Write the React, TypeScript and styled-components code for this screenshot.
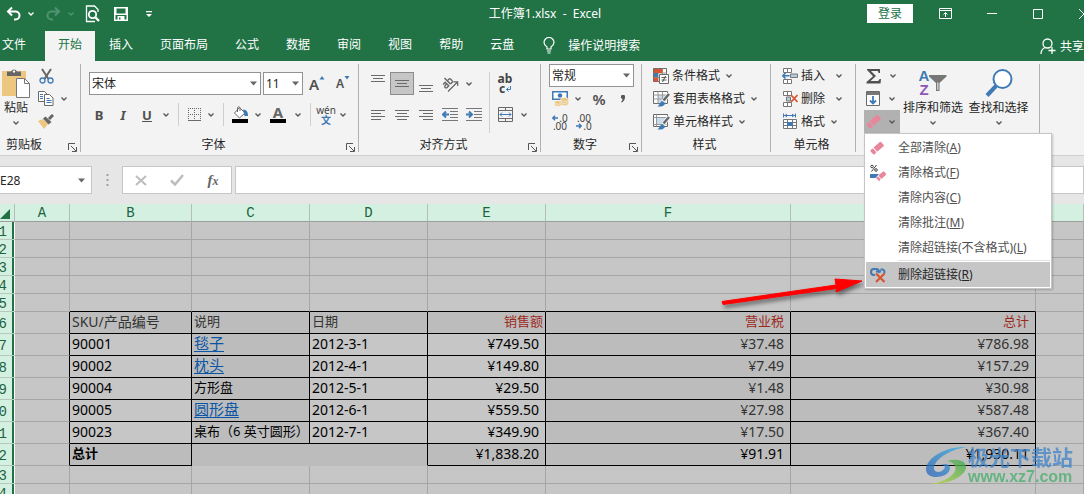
import React from "react";
import styled, { createGlobalStyle, css } from "styled-components";

const ui = `"Noto Sans", "Noto Sans CJK SC", sans-serif`;
const song = `"Liberation Mono", "Noto Sans CJK SC", monospace`;
const green = "#217346";
const gray = "#6a6a6a";
const blue = "#3f7ab5";

const Global = createGlobalStyle`
  * { box-sizing: border-box; }
  body { margin: 0; font-family: ${ui}; font-size: 12px; color: #262626; }
  button, input, select { font: inherit; color: inherit; }
  button { border: 0; padding: 0; background: none; white-space: nowrap; }
  svg { display: block; flex: none; }
`;

const Page = styled.div`
  height: 100vh;
  display: flex;
  flex-direction: column;
  overflow: hidden;
  background: #e6e6e6;
`;

/* ---------- title bar and tabs ---------- */
const TitleBar = styled.header`
  flex: none;
  height: 31px;
  padding-bottom: 4px;
  display: grid;
  grid-template-columns: 1fr auto 1fr;
  align-items: center;
  background: ${green};
  color: #fff;
  overflow: hidden;
`;
const QuickBar = styled.div`
  display: flex;
  align-items: center;
  padding-left: 6px;
`;
const Title = styled.h1`
  margin: 0;
  padding-left: 6px;
  font-size: 12px;
  font-weight: 400;
  line-height: 18px;
  white-space: pre;
`;
const WindowBar = styled.div`
  display: flex;
  align-items: center;
  justify-content: flex-end;
  margin-right: -23px;
`;
const SignIn = styled.button`
  width: 46px;
  height: 19px;
  margin-right: 9px;
  background: #fff;
  color: ${green};
  line-height: 18px;
`;
const IconButton = styled.button<{ $w?: number; $on?: boolean }>`
  flex: none;
  width: ${(p) => p.$w ?? 24}px;
  height: 23px;
  display: flex;
  align-items: center;
  justify-content: center;
  ${(p) => p.$on && css`background: #c6c6c6; border: 1px solid #8c8c8c;`}
`;
const TabBar = styled.nav`
  flex: none;
  height: 30px;
  display: flex;
  gap: 1px;
  background: ${green};
  color: #fff;
  overflow: hidden;
`;
const Tab = styled.button<{ $active?: boolean; $file?: boolean }>`
  padding: ${(p) => (p.$file ? "0 18px 0 2px" : "0 13px")};
  line-height: 26px;
  padding-bottom: 2px;
  ${(p) => p.$active && css`background: #f3f3f3; color: ${green};`}
`;
const Tell = styled.button`
  display: flex;
  align-items: center;
  gap: 13px;
  padding: 0 14px 2px 15px;
`;
const Share = styled.button`
  display: flex;
  align-items: center;
  gap: 4px;
  margin-left: auto;
`;

/* ---------- ribbon ---------- */
const Ribbon = styled.section`
  flex: none;
  display: flex;
  height: 95px;
  padding: 3px 0;
  background: #f3f3f3;
  border-bottom: 1px solid #d0d0d0;
`;
const Group = styled.div<{ $w: number }>`
  flex: none;
  width: ${(p) => p.$w}px;
  display: flex;
  flex-direction: column;
  justify-content: space-between;
  border-right: 1px solid #b1b1b1;
`;
const Body = styled.div<{ $pad?: string }>`
  height: 69px;
  display: flex;
  padding: ${(p) => p.$pad ?? "0"};
`;
const Caption = styled.div<{ $left?: boolean }>`
  height: 14px;
  line-height: 14px;
  display: flex;
  text-align: ${(p) => (p.$left ? "left" : "center")};
  padding: 0 3px 0 ${(p) => (p.$left ? 6 : 0)}px;
  span { flex: 1; }
  svg { margin-top: 5px; }
`;
const Col = styled.div<{ $gap?: number }>`
  display: flex;
  flex-direction: column;
  gap: ${(p) => p.$gap ?? 0}px;
`;
const Row = styled.div<{ $gap?: number }>`
  display: flex;
  align-items: center;
  gap: ${(p) => p.$gap ?? 0}px;
`;
const BigButton = styled.button<{ $w: number }>`
  width: ${(p) => p.$w}px;
  display: flex;
  flex-direction: column;
  align-items: center;
  justify-content: flex-start;
  padding-top: 4px;
  line-height: 16px;
`;
const BigLabel = styled.span`
  margin: 2px 0 4px;
`;
const RowButton = styled.button<{ $gap?: number }>`
  height: 23px;
  display: flex;
  align-items: center;
  gap: 3px;
  line-height: 18px;
  > svg:last-child { margin-left: ${(p) => p.$gap ?? 2}px; }
`;
const Rule = styled.i<{ $m?: number }>`
  width: 1px;
  align-self: stretch;
  margin: 0 ${(p) => p.$m ?? 5}px;
  background: #cfcfcf;
`;
const Combo = styled.label<{ $w: number }>`
  position: relative;
  width: ${(p) => p.$w}px;
  height: 23px;
  svg { position: absolute; right: 4px; top: 9px; pointer-events: none; }
`;
const Select = styled.select`
  appearance: none;
  width: 100%;
  height: 100%;
  border: 1px solid #939393;
  border-radius: 0;
  background: #fff;
  padding: 0 2px;
`;
const Letter = styled.span<{ $i?: boolean; $u?: boolean; $s?: number; $w?: number }>`
  font-size: ${(p) => p.$s ?? 13}px;
  line-height: 16px;
  font-weight: ${(p) => p.$w ?? 700};
  color: #505050;
  font-style: ${(p) => (p.$i ? "italic" : "normal")};
  text-decoration: ${(p) => (p.$u ? "underline" : "none")};
`;
const ClearBox = styled.div`
  position: relative;
`;
const Tool = styled.button<{ $open?: boolean }>`
  width: 36px;
  height: 23px;
  display: flex;
  align-items: center;
  gap: 7px;
  padding-left: 2px;
  background: ${(p) => (p.$open ? "#b1b1b1" : "transparent")};
`;
const Menu = styled.div`
  position: absolute;
  z-index: 5;
  top: 100%;
  left: 0;
  width: 188px;
  padding: 1px;
  border: 1px solid #c6c6c6;
  background: #fff;
  box-shadow: 1px 1px 2px rgba(0, 0, 0, 0.2);
`;
const MenuItem = styled.button<{ $hot?: boolean }>`
  width: 100%;
  height: 25px;
  display: flex;
  align-items: center;
  line-height: 18px;
  color: ${(p) => (p.$hot ? "#262626" : "#505050")};
  background: ${(p) => (p.$hot ? "#c6c6c6" : "#fff")};
`;
const MenuIcon = styled.span`
  width: 32px;
  padding-left: 4px;
`;
const MenuRule = styled.hr`
  margin: 0 0 0 32px;
  border: 0;
  border-top: 1px solid #e1e1e1;
  border-bottom: 1px solid #fff;
`;

/* ---------- formula bar ---------- */
const FormulaBar = styled.section`
  flex: none;
  display: flex;
  align-items: center;
  padding: 10px 0;
`;
const Field = styled.div<{ $w?: number }>`
  ${(p) => (p.$w ? css`flex: none; width: ${p.$w}px;` : css`flex: 1;`)}
  height: 28px;
  display: flex;
  align-items: center;
  background: #fff;
  border: 1px solid #c6c6c6;
  input { flex: 1; min-width: 0; border: 0; padding: 0; outline: 0; background: none; }
`;
const NameField = styled(Field)`
  border-left: 0;
  padding-right: 6px;
`;
const Dots = styled.span`
  flex: none;
  width: 30px;
  svg { margin: 0 auto; }
`;
const Fx = styled.span`
  font: italic 700 15px/18px "Liberation Serif", serif;
  color: #666;
  small { font-size: 12px; }
`;
const CheckField = styled(Field)`
  justify-content: space-around;
  margin-right: 3px;
`;

/* ---------- sheet ---------- */
const Sheet = styled.main`
  position: relative;
  flex: 1;
  min-height: 0;
  overflow: hidden;
  background: #c6c6c6;
`;
const Grid = styled.table`
  width: 100%;
  table-layout: fixed;
  border-collapse: separate;
  border-spacing: 0;
`;
const ColHead = styled.th`
  height: 18px;
  padding: 2px 0 0;
  font: 14px/15px ${song};
  color: #1d6340;
  background: #d3f0e0;
  border-right: 1px solid #b5bdb9;
  border-bottom: 1px solid #9d9d9d;
`;
const RowHead = styled.th<{ $h: number }>`
  height: ${(p) => p.$h}px;
  padding: 3px 8px 0 0;
  direction: rtl;
  text-align: right;
  overflow: hidden;
  font: 14px/14px ${song};
  color: #1d6340;
  background: linear-gradient(to right, #d3f0e0 12px, ${green} 12px 14px, #fff 14px);
  border-bottom: 1px solid #b5c9be;
`;
type CellProps = { $dark?: boolean; $right?: boolean; $bottom?: boolean; $noRight?: boolean; $num?: boolean; $color?: string; $pad?: number; $size?: number; $bold?: boolean };
const Cell = styled.td<CellProps>`
  padding: 0 ${(p) => p.$pad ?? 2}px 2px 2px;
  line-height: 15px;
  white-space: nowrap;
  overflow: hidden;
  font-size: ${(p) => p.$size ?? 14}px;
  font-weight: ${(p) => (p.$bold ? 700 : 400)};
  color: ${(p) => p.$color ?? "#000"};
  text-align: ${(p) => (p.$num ? "right" : "left")};
  background: ${(p) => (p.$dark ? "#bcbcbc" : "#c6c6c6")};
  border-right: 1px solid ${(p) => (p.$noRight ? "#bcbcbc" : p.$right ? "#000" : "#a6a6a6")};
  border-bottom: 1px solid ${(p) => (p.$bottom ? "#000" : p.$dark ? "#bcbcbc" : "#a6a6a6")};
`;
const Link = styled.a`
  color: #0a56a5;
  font-size: 15px;
  font-weight: 400;
  text-underline-offset: 2px;
`;
const Arrow = styled.svg`
  position: absolute;
  left: 716px;
  top: 70px;
  filter: drop-shadow(2px 3px 2px rgba(0, 0, 0, 0.5));
`;
const Watermark = styled.div`
  position: absolute;
  right: 11px;
  bottom: 8px;
  display: flex;
  align-items: center;
  gap: 1px;
  opacity: 0.75;
`;
const MarkName = styled.div`
  font-size: 21px;
  line-height: 22px;
  font-weight: 700;
  color: #3f83c8;
`;
const MarkSite = styled.div`
  font: 700 16px/18px "Liberation Sans", sans-serif;
  color: #45ad6a;
`;

/* ---------- icons ---------- */
const Chev = ({ c = "#555" }: { c?: string }) => (
  <svg width="8" height="6" viewBox="0 0 8 6" fill="none" stroke={c} strokeWidth="1.3"><path d="M1.5 1.5 4 4l2.500-2.500" /></svg>
);
const Tri = () => <svg width="7" height="5" viewBox="0 0 7 5"><path d="M0 .5h7L3.500 4.500z" fill="#666" /></svg>;
const Launcher = () => (
  <svg width="9" height="9" viewBox="0 0 9 9" fill="none" stroke="#555"><path d="M.5 7V.5H7M3 3l5 5M8.500 4v4.500H4" /></svg>
);
const Lines = ({ rows, y = 2 }: { rows: [number, number][]; y?: number }) => (
  <svg width="16" height="18" viewBox="0 0 16 18" stroke="#6a6a6a">
    {rows.map(([a, b], i) => <path key={i} d={`M${a} ${y + i * 3 + 0.5}H${b}`} />)}
  </svg>
);
const Undo = ({ flip }: { flip?: boolean }) => (
  <svg width="16" height="16" viewBox="0 0 16 16" fill="none" stroke={flip ? "#4f9370" : "#fff"} strokeWidth="2">
    <g transform={flip ? "translate(16 0) scale(-1 1)" : undefined}><path d="M6 1.500 2 5.500l4 4M2 5.500H9.500a4 4 0 0 1 0 8H8" /></g>
  </svg>
);
const Preview = () => (
  <svg width="16" height="18" viewBox="0 0 16 18" fill="none" stroke="#fff" strokeWidth="1.3">
    <path d="M13 7V4.500L9.500 1H1.500v15.500H10" /><circle cx="7.500" cy="9.500" r="3.700" strokeWidth="1.800" /><path d="m10.500 12.500 3.500 3.500" strokeWidth="2.400" />
  </svg>
);
const Save = () => (
  <svg width="14" height="14" viewBox="0 0 14 14"><path fillRule="evenodd" d="M0 0h14v14H0zM2.500 1.500v5h9v-5zM1.500 8v4.500H3.500V9h7v3.500h2V8zM5 10.500v2h1.500v-2z" fill="#fff" /></svg>
);
const Customize = () => <svg width="8" height="8" viewBox="0 0 8 8" fill="#fff"><path d="M1 1h6v1.300H1zM1 4h6L4 7z" /></svg>;
const Bulb = () => (
  <svg width="12" height="17" viewBox="0 0 12 17" fill="none" stroke="#fff" strokeWidth="1.200"><path d="M4 12v-2C2 8.500 1 7.500 1 5.500a5 5 0 0 1 10 0C11 7.500 10 8.500 8 10v2zM4 14h4M4.500 16h3" /></svg>
);
const Person = () => (
  <svg width="16" height="17" viewBox="0 0 16 17" fill="none" stroke="#fff" strokeWidth="1.300"><circle cx="7.500" cy="5.500" r="4.500" /><path d="M1 16c0-3.500 1.800-5.500 4-6.500M12 9v7M8.500 12.500h7" /></svg>
);
const RibbonOpt = () => <svg width="13" height="11" viewBox="0 0 13 11" fill="none" stroke="#fff"><path d="M.5.5h12v10H.5zM.5 2.500h12M6.500 9V4.500M4.500 6.500l2-2 2 2" /></svg>;
const Min = () => <svg width="10" height="10" viewBox="0 0 10 10" stroke="#fff"><path d="M0 4.500h10" /></svg>;
const Max = () => <svg width="10" height="10" viewBox="0 0 10 10" fill="none" stroke="#fff"><path d="M.5.5h9v9h-9z" /></svg>;
const Close = () => <svg width="10" height="10" viewBox="0 0 10 10" stroke="#fff"><path d="m0 0 10 10M10 0 0 10" /></svg>;
const Paste = () => (
  <svg width="28" height="30" viewBox="0 0 28 30"><path d="M0 3h24v25H0z" fill="#edc67f" /><path d="M5 3.500h4a3.200 3.200 0 0 1 6 0h4V8H5z" fill="#666" /><circle cx="12" cy="3.500" r="1.200" fill="#f3f3f3" /><path d="M14.500 10.500h8l5 5v14h-13z" fill="#fff" stroke="#777" /><path d="M22.500 10.500v5h5" fill="none" stroke="#777" /></svg>
);
const Cut = () => (
  <svg width="15" height="16" viewBox="0 0 15 16" fill="none"><path d="m3 1 6.500 10M12 1 5.500 11" stroke="#666" strokeWidth="2" /><circle cx="3.500" cy="12.500" r="2.500" stroke={blue} strokeWidth="1.300" /><circle cx="11.500" cy="12.500" r="2.500" stroke={blue} strokeWidth="1.300" /></svg>
);
const Copy = () => (
  <svg width="16" height="15" viewBox="0 0 16 15" fill="#fff" stroke={gray}><path d="M.5.5h6l3 3v7h-9z" /><path d="M6.500 3.500h5l3.500 3.500v7.500H6.500z" /><path d="M2 3.500h3M2 5.500h3M2 7.500h3M8.500 7.500h3M8.500 9.500h5M8.500 11.500h5" stroke={blue} /></svg>
);
const Brush = () => (
  <svg width="16" height="15" viewBox="0 0 16 15"><path d="m0 7 5-2 5 5-4 5z" fill="#edc67f" /><path d="m5 4.500 2.500-2 6 5.500-3 2.500z" fill="#666" /><path d="m11 5 4-4" stroke="#666" strokeWidth="3" /></svg>
);
const Grow = ({ down }: { down?: boolean }) => (
  <svg width="6" height="4" viewBox="0 0 6 4"><path d={down ? "M.5 0h5L3 3.500z" : "M3 0l2.500 3.500h-5z"} fill={blue} /></svg>
);
const Borders = () => (
  <svg width="13" height="13" viewBox="0 0 13 13" fill={gray} shapeRendering="crispEdges">
    {[0, 6, 12].map((p) => [0, 2, 4, 6, 8, 10].map((q) => <React.Fragment key={`${p}-${q}`}><rect x={p} y={q} width="1" height="1" />{p < 12 && <rect x={q} y={p} width="1" height="1" />}</React.Fragment>))}
    <rect x="0" y="12" width="13" height="1" />
  </svg>
);
const Bucket = () => (
  <svg width="17" height="17" viewBox="0 0 17 17"><path d="M7.500 1.500 13 7l-5.500 5L2.500 7z" fill="#fff" stroke={gray} /><path d="M5.500 6V1.500Q6.500 0 8 1.500V5" fill="none" stroke={gray} /><path d="M11 3.500c4 0 5 3 5 6.500h-3.500z" fill={blue} /><path d="M0 13h16v4H0z" /></svg>
);
const Orient = () => (
  <svg width="17" height="16" viewBox="0 0 17 16" fill="none" stroke="#666"><path d="M6 15.500 15.500 6M11.500 5.800h4.200V10" strokeWidth="1.200" /><g transform="rotate(-45 6 7)" strokeWidth="1.400"><path d="M1.500 4.500h3v5H2.300a1.400 1.400 0 0 1 0-2.800h2.200M7 1v8.500M7 5h2.500a1 1 0 0 1 1 1v2.500a1 1 0 0 1-1 1H7" /></g></svg>
);
const Indent = ({ out }: { out?: boolean }) => (
  <svg width="16" height="14" viewBox="0 0 16 14" fill="none" stroke="#777"><path d="M0 .5h16M8 3.500h8M8 6.500h8M8 9.500h8M0 12.500h16" /><path d={out ? "M7 6.500H1M4 3.500 1 6.500l3 3" : "M0 6.500h6M3 3.500l3 3-3 3"} stroke={blue} strokeWidth="2" /></svg>
);
const Merge = () => (
  <svg width="15" height="15" viewBox="0 0 15 15" fill="none" stroke={gray}><path d="M.5.5h14v14H.5zM.5 3.500h14M.5 11.500h14M7.500.5v3M7.500 11.500v3" /><path d="M2 7.500h11M4 5.500l-2 2 2 2M11 5.500l2 2-2 2" stroke={blue} /></svg>
);
const WrapReturn = () => <svg width="5" height="6" viewBox="0 0 5 6" fill="none" stroke={blue}><path d="M4.500 0v3.500H.5M2.500 1.500l-2 2 2 2" /></svg>;
const Money = () => (
  <svg width="17" height="16" viewBox="0 0 17 16"><path d="M.75.75h14.500v7.500H.75z" fill="#fff" stroke={blue} strokeWidth="1.500" /><circle cx="8" cy="4.500" r="2.300" fill={blue} /><g fill="#edc67f" stroke="#f3f3f3" strokeWidth=".6"><ellipse cx="12.500" cy="12.500" rx="4" ry="2" /><ellipse cx="12.500" cy="10.500" rx="4" ry="2" /><ellipse cx="12.500" cy="8.500" rx="4" ry="2" /><ellipse cx="6" cy="13.500" rx="3.500" ry="1.800" /><ellipse cx="6" cy="11.500" rx="3.500" ry="1.800" /></g></svg>
);
const Step = ({ right }: { right?: boolean }) => (
  <svg width="6" height="6" viewBox="0 0 6 6" fill="none" stroke={blue} strokeWidth="1.500"><path d={right ? "M0 3h5M3 .8 5.200 3 3 5.200" : "M6 3H1M3 .8.8 3 3 5.200"} /></svg>
);
const CondFmt = () => (
  <svg width="16" height="16" viewBox="0 0 16 16"><path d="M.5.5h13v13H.5z" fill="#fff" stroke={gray} /><path d="M5 .5v13M9.500.5v13M.5 5h13M.5 9.500h13" stroke="#999" /><path d="M1 1h4v4H1zM1 9.500h4v4H1z" fill="#d65532" /><path d="M5 1h4.500v4H5z" fill="#d65532" /><path d="M1 5h4v4H1z" fill={blue} /><path d="M6.500 6.500h9v9h-9z" fill="#fff" stroke={gray} /><path d="M8.500 9.500h5M8.500 12h5M12.500 8l-3 6" stroke="#555" /></svg>
);
const TableFmt = ({ one }: { one?: boolean }) => (
  <svg width="17" height="16" viewBox="0 0 17 16"><path d="M.5.5h14v12H.5z" fill="#fff" stroke={gray} /><path d={one ? "M4 4h8v6H4z" : "M5 4h8v8H5z"} fill="#c9dcee" /><path d={one ? "M.5 3.500h14M3.500.5v12M.5 10.500h13" : "M.5 4h14M.5 8h13M5 .5v12M9.500.5v12"} stroke="#999" /><path d="m16 3-6 7.500" stroke="#f3f3f3" strokeWidth="4" /><path d="m16 3-5.500 6.500" stroke="#666" strokeWidth="2.400" /><path d="M4 15.500c2 0 2.500-4 5-5.500l3 2c0 3-4 4-8 3.500z" fill={blue} /></svg>
);
const CellIcon = ({ kind }: { kind: "ins" | "del" }) => (
  <svg width="16" height="16" viewBox="0 0 16 16" fill="#fff" stroke="#777"><path d="M1.500.5h8v4h-8zM5.500.5v4M1.500 11.500h8v4h-8zM5.500 11.500v4" /><path d={kind === "ins" ? "M8.500 6h7v3.500h-7z" : "M4.500 6h4v4h-4z"} fill="#b9cbe0" />{kind === "ins" ? <path d="M7.500 7.800H1M3.500 5 .8 7.800l2.700 2.700" fill="none" stroke={blue} strokeWidth="1.600" /> : <path d="m9 4 6.500 7M15.500 4 9 11" stroke="#d65532" strokeWidth="1.800" />}</svg>
);
const FmtIcon = () => (
  <svg width="16" height="17" viewBox="0 0 16 17" fill="none" stroke="#777"><path d="M1 2.500h12M1.500.5v4M13.500.5v4M5 1l-2 1.500L5 4M10 1l2 1.500L10 4" stroke={blue} /><path d="M1.500 6.500h13v9h-13zM5.500 6.500v9M10.500 6.500v9M1.500 9.500h13M1.500 12.500h13" fill="#fff" /><path d="M5 9h5.500v4H5z" fill={blue} stroke="none" /></svg>
);
const Sigma = () => <svg width="16" height="16" viewBox="0 0 16 16"><path d="M1 1h13v4h-1.500c0-1.500-.5-2-2-2H5l5 5-5.500 5H11c1.500 0 2-.5 2.500-2H15l-.5 4.500H.5V14L7 8.200 1 2z" fill="#505050" /></svg>;
const Fill = () => <svg width="15" height="15" viewBox="0 0 15 15" fill="#fff" stroke={gray}><path d="M.5.5h13v14H.5z" /><path d="M1 1h12v3H1z" fill="#777" stroke="none" /><path d="M7 5v7.500M4 9.500l3 3 3-3" fill="none" stroke={blue} strokeWidth="1.800" /></svg>;
const Eraser = ({ s = 15 }: { s?: number }) => <svg width={s} height={s} viewBox="0 0 15 15"><g transform="rotate(-42 7.500 7.500)"><rect x="0" y="4.700" width="4" height="6" rx="1" fill="#e8879b" /><path d="M5 4.700h9a1 1 0 0 1 1 1v4a1 1 0 0 1-1 1H5z" fill="#e8879b" /></g></svg>;
const ClearFmt = () => <svg width="16" height="17" viewBox="0 0 16 17"><g fill="none" stroke="#444"><circle cx="2" cy="2.500" r="1.300" /><circle cx="6" cy="6" r="1.300" /><path d="M6.500 1 1.500 7.500" /></g><path d="M0 10h9l-3.500 4H0z" fill={blue} /><g transform="translate(6 7) rotate(-42 5 5)"><rect x="0" y="3" width="2.500" height="4.500" rx=".8" fill="#e8879b" /><rect x="3.300" y="3" width="7" height="4.500" rx=".8" fill="#e8879b" /></g></svg>;
const Unlink = () => <svg width="17" height="16" viewBox="0 0 17 16" fill="none"><path d="M5 8H4a3 3 0 0 1 0-6h2.500a2.500 2.500 0 0 1 2 4M10.500 2.500h2a2.500 2.500 0 0 1 1.500 4M6 4.500h5" stroke={blue} strokeWidth="2" /><path d="m6 6.500 8.500 8.500M14.500 6.500 6 15" stroke="#d65532" strokeWidth="2.200" /></svg>;
const SortFunnel = () => <svg width="18" height="17" viewBox="0 0 18 17"><path d="M0 0h17.500v1.500L10.500 8v8H7V8L0 1.500z" fill="#777" /><path d="M8.300 7.500h1V15h-1z" fill="#f3f3f3" /></svg>;
const Magnifier = () => <svg width="28" height="30" viewBox="0 0 28 30" fill="none" stroke={blue}><circle cx="17.500" cy="11" r="9" fill="#fff" strokeWidth="2" /><path d="m11 18-9 9.500" strokeWidth="4" /></svg>;

const SortIcon = styled.span`
  display: flex;
  height: 30px;
  align-items: center;
`;
const AZ = styled.span`
  display: flex;
  flex-direction: column;
  font: 700 15px/14px "Liberation Sans", sans-serif;
  color: ${blue};
  b:last-child { color: #8e57b5; }
`;
const Stack = styled.span<{ $size: number; $lh: number }>`
  display: block;
  font-size: ${(p) => p.$size}px;
  line-height: ${(p) => p.$lh}px;
  color: #444;
  span { display: flex; align-items: center; gap: 1px; justify-content: center; }
`;
const FontSize = styled.span`
  display: flex;
  align-items: flex-start;
`;
const FontColor = styled.span`
  width: 16px;
  border-bottom: 4px solid #000;
  font-weight: 700;
  font-size: 15px;
  line-height: 13px;
  color: #666;
`;
const Blue = styled.b`
  color: ${blue};
`;

const Drop = ({ label, w = 14 }: { label: string; w?: number }) => <IconButton $w={w} aria-label={label}><Chev /></IconButton>;

/* ---------- data ---------- */
const columns = [55, 122, 118, 118, 118, 245, 245];
const items: [string, string, boolean, string, string, string, string][] = [
  ["90001", "毯子", true, "2012-3-1", "¥749.50", "¥37.48", "¥786.98"],
  ["90002", "枕头", true, "2012-4-1", "¥149.80", "¥7.49", "¥157.29"],
  ["90004", "方形盘", false, "2012-5-1", "¥29.50", "¥1.48", "¥30.98"],
  ["90005", "圆形盘", true, "2012-6-1", "¥559.50", "¥27.98", "¥587.48"],
  ["90023", "桌布（6 英寸圆形）", false, "2012-7-1", "¥349.90", "¥17.50", "¥367.40"],
];
const EmptyRow = ({ n, last }: { n: number; last?: boolean }) => (
  <tr>
    <RowHead scope="row" $h={18}>{n}</RowHead>
    {Array.from({ length: 8 }, (_, i) => <Cell key={i} $bottom={last && i > 0 && i < 7} />)}
  </tr>
);

export default function App() {
  return (
    <Page>
      <Global />
      <TitleBar>
        <QuickBar>
          <IconButton $w={16} aria-label="撤消"><Undo /></IconButton>
          <IconButton $w={18} aria-label="撤消列表"><Chev c="#fff" /></IconButton>
          <IconButton $w={26} aria-label="恢复"><Undo flip /></IconButton>
          <IconButton $w={10} aria-label="恢复列表"><Chev c="#4f9370" /></IconButton>
          <IconButton $w={34} aria-label="打印预览"><Preview /></IconButton>
          <IconButton $w={22} aria-label="保存"><Save /></IconButton>
          <IconButton $w={34} aria-label="自定义快速访问工具栏"><Customize /></IconButton>
        </QuickBar>
        <Title>{"工作簿1.xlsx  -  Excel"}</Title>
        <WindowBar>
          <SignIn>登录</SignIn>
          <IconButton $w={47} aria-label="功能区显示选项"><RibbonOpt /></IconButton>
          <IconButton $w={46} aria-label="最小化"><Min /></IconButton>
          <IconButton $w={46} aria-label="最大化"><Max /></IconButton>
          <IconButton $w={46} aria-label="关闭"><Close /></IconButton>
        </WindowBar>
      </TitleBar>
      <TabBar>
        <Tab $file>文件</Tab>
        <Tab $active>开始</Tab>
        {["插入", "页面布局", "公式", "数据", "审阅", "视图", "帮助", "云盘"].map((t) => <Tab key={t}>{t}</Tab>)}
        <Tell><Bulb />操作说明搜索</Tell>
        <Share><Person />共享</Share>
      </TabBar>

      <Ribbon>
        <Group $w={81}>
          <Body>
            <BigButton $w={32}><Paste /><BigLabel>粘贴</BigLabel><Chev /></BigButton>
            <Col>
              <IconButton $w={28} aria-label="剪切"><Cut /></IconButton>
              <Row><IconButton $w={28} aria-label="复制"><Copy /></IconButton><Drop w={8} label="复制选项" /></Row>
              <IconButton $w={28} aria-label="格式刷"><Brush /></IconButton>
            </Col>
          </Body>
          <Caption $left><span>剪贴板</span><Launcher /></Caption>
        </Group>

        <Group $w={278}>
          <Body $pad="8px 0 0 6px">
            <Col $gap={8}>
              <Row $gap={2}>
                <i />
                <Combo $w={172}><Select aria-label="字体"><option>宋体</option></Select><Tri /></Combo>
                <Combo $w={40}><Select aria-label="字号"><option>11</option></Select><Tri /></Combo>
                <IconButton aria-label="增大字号"><FontSize><Letter $s={15} $w={600}>A</Letter><Grow /></FontSize></IconButton>
                <IconButton aria-label="减小字号"><FontSize><Letter $s={12} $w={600}>A</Letter><Grow down /></FontSize></IconButton>
              </Row>
              <Row>
                <IconButton aria-label="加粗"><Letter>B</Letter></IconButton>
                <IconButton aria-label="倾斜"><Letter $i>I</Letter></IconButton>
                <IconButton aria-label="下划线"><Letter $u>U</Letter></IconButton>
                <Drop label="下划线选项" />
                <Rule />
                <IconButton $w={20} aria-label="边框"><Borders /></IconButton>
                <Drop label="边框选项" />
                <Rule />
                <IconButton $w={22} aria-label="填充颜色"><Bucket /></IconButton>
                <Drop label="填充颜色选项" />
                <IconButton $w={26} aria-label="字体颜色"><FontColor>A</FontColor></IconButton>
                <Drop label="字体颜色选项" />
                <Rule />
                <IconButton $w={20} aria-label="拼音"><Stack $size={10} $lh={10}><span>wén</span><span><Blue>文</Blue></span></Stack></IconButton>
                <Drop label="拼音选项" />
              </Row>
            </Col>
          </Body>
          <Caption><span>字体</span><Launcher /></Caption>
        </Group>

        <Group $w={182}>
          <Body $pad="8px 0 0 7px">
            <Col $gap={8}>
              <Row>
                <IconButton aria-label="顶端对齐"><Lines y={0} rows={[[1, 15], [3, 13], [1, 15]]} /></IconButton>
                <IconButton $on aria-label="垂直居中"><Lines y={5} rows={[[1, 15], [3, 13], [1, 15]]} /></IconButton>
                <IconButton aria-label="底端对齐"><Lines y={10} rows={[[1, 15], [3, 13], [1, 15]]} /></IconButton>
                <IconButton aria-label="方向"><Orient /></IconButton>
                <Drop label="方向选项" />
              </Row>
              <Row>
                <IconButton aria-label="左对齐"><Lines y={4} rows={[[1, 15], [1, 11], [1, 15], [1, 11]]} /></IconButton>
                <IconButton aria-label="居中"><Lines y={4} rows={[[1, 15], [3, 13], [1, 15], [3, 13]]} /></IconButton>
                <IconButton aria-label="右对齐"><Lines y={4} rows={[[1, 15], [5, 15], [1, 15], [5, 15]]} /></IconButton>
                <IconButton aria-label="减少缩进量"><Indent out /></IconButton>
                <IconButton aria-label="增加缩进量"><Indent /></IconButton>
              </Row>
            </Col>
            <Rule $m={3} />
            <Col $gap={8}>
              <IconButton aria-label="自动换行"><Stack $size={12} $lh={10}><b>ab</b><span><b>c</b><WrapReturn /></span></Stack></IconButton>
              <Row><IconButton aria-label="合并后居中"><Merge /></IconButton><Drop label="合并选项" /></Row>
            </Col>
          </Body>
          <Caption><span>对齐方式</span><Launcher /></Caption>
        </Group>

        <Group $w={101}>
          <Body $pad="0 0 0 8px">
            <Col>
              <Combo $w={85}><Select aria-label="数字格式"><option>常规</option></Select><Tri /></Combo>
              <Row>
                <IconButton $w={22} aria-label="会计数字格式"><Money /></IconButton><Drop label="会计格式选项" />
                <IconButton $w={28} aria-label="百分比样式"><Letter $s={15} $w={600}>%</Letter></IconButton>
                <IconButton $w={20} aria-label="千位分隔样式"><svg width="6" height="8" viewBox="0 0 6 8"><path d="M1 1.500a2 2 0 0 1 4 .5c0 3-1.500 4.500-3.500 5.500L1 7c1-.8 1.500-1.800 1.500-3A2 2 0 0 1 1 1.500" fill="#555" /></svg></IconButton>
              </Row>
              <Row>
                <IconButton $w={22} aria-label="增加小数位数"><Stack $size={10} $lh={8}><span><Step />.0</span><span>.00</span></Stack></IconButton>
                <IconButton $w={26} aria-label="减少小数位数"><Stack $size={10} $lh={8}><span>.00</span><span><Step right />.0</span></Stack></IconButton>
              </Row>
            </Col>
          </Body>
          <Caption><span>数字</span><Launcher /></Caption>
        </Group>

        <Group $w={129}>
          <Body $pad="0 0 0 11px">
            <Col>
              <RowButton><CondFmt />条件格式<Chev /></RowButton>
              <RowButton><TableFmt />套用表格格式<Chev /></RowButton>
              <RowButton><TableFmt one />单元格样式<Chev /></RowButton>
            </Col>
          </Body>
          <Caption><span>样式</span></Caption>
        </Group>

        <Group $w={85}>
          <Body $pad="0 0 0 11px">
            <Col>
              <RowButton $gap={7}><CellIcon kind="ins" />插入<Chev /></RowButton>
              <RowButton $gap={7}><CellIcon kind="del" />删除<Chev /></RowButton>
              <RowButton><FmtIcon />格式<Chev /></RowButton>
            </Col>
          </Body>
          <Caption><span>单元格</span></Caption>
        </Group>

        <Group $w={184}>
          <Body $pad="0 0 0 8px">
            <Col>
              <Tool aria-label="自动求和"><Sigma /><Chev /></Tool>
              <Tool aria-label="填充"><Fill /><Chev /></Tool>
              <ClearBox>
                <Tool $open aria-label="清除"><Eraser /><Chev /></Tool>
                <Menu role="menu">
                  <MenuItem role="menuitem"><MenuIcon><Eraser s={14} /></MenuIcon>全部清除(<u>A</u>)</MenuItem>
                  <MenuItem role="menuitem"><MenuIcon><ClearFmt /></MenuIcon>清除格式(<u>F</u>)</MenuItem>
                  <MenuItem role="menuitem"><MenuIcon />清除内容(<u>C</u>)</MenuItem>
                  <MenuItem role="menuitem"><MenuIcon />清除批注(<u>M</u>)</MenuItem>
                  <MenuItem role="menuitem"><MenuIcon />清除超链接(不含格式)(<u>L</u>)</MenuItem>
                  <MenuRule />
                  <MenuItem role="menuitem" $hot><MenuIcon><Unlink /></MenuIcon>删除超链接(<u>R</u>)</MenuItem>
                </Menu>
              </ClearBox>
            </Col>
            <BigButton $w={66}><SortIcon><AZ><b>A</b><b>Z</b></AZ><SortFunnel /></SortIcon><BigLabel>排序和筛选</BigLabel><Chev /></BigButton>
            <BigButton $w={65}><Magnifier /><BigLabel>查找和选择</BigLabel><Chev /></BigButton>
          </Body>
        </Group>
      </Ribbon>

      <FormulaBar>
        <NameField $w={92}><input aria-label="名称框" defaultValue="E28" /><Tri /></NameField>
        <Dots><svg width="3" height="12" viewBox="0 0 3 12" fill="#a0a0a0"><path d="M.5 0h2v2h-2zM.5 5h2v2h-2zM.5 10h2v2h-2z" /></svg></Dots>
        <CheckField $w={110}>
          <IconButton aria-label="取消"><svg width="12" height="11" viewBox="0 0 12 11" stroke="#bdbdbd" strokeWidth="2"><path d="m1 1 10 9M11 1 1 10" /></svg></IconButton>
          <IconButton aria-label="输入"><svg width="14" height="12" viewBox="0 0 14 12" fill="none" stroke="#bdbdbd" strokeWidth="2.500"><path d="m1 6.500 4 4L13 1" /></svg></IconButton>
          <IconButton aria-label="插入函数"><Fx>f<small>x</small></Fx></IconButton>
        </CheckField>
        <Field><input aria-label="编辑栏" /></Field>
      </FormulaBar>

      <Sheet>
        <Grid>
          <colgroup>
            <col width={15} />
            {columns.map((w, i) => <col key={i} width={w} />)}
            <col />
          </colgroup>
          <thead>
            <tr>
              <ColHead aria-label="全选"><svg width="10" height="10" viewBox="0 0 10 10"><path d="M10 0v10H0z" fill={green} /></svg></ColHead>
              {["A", "B", "C", "D", "E", "F"].map((c) => <ColHead key={c} scope="col">{c}</ColHead>)}
              <ColHead scope="col" aria-label="G" />
              <ColHead scope="col" aria-label="H" />
            </tr>
          </thead>
          <tbody>
            {[1, 2, 3, 4, 5].map((n) => <EmptyRow key={n} n={n} last={n === 5} />)}
            <tr>
              <RowHead scope="row" $h={22}>6</RowHead>
              <Cell $right />
              <Cell $dark $right $bottom $color="#333">SKU/产品编号</Cell>
              <Cell $dark $right $bottom $size={13} $color="#333">说明</Cell>
              <Cell $dark $right $bottom $size={13} $color="#333">日期</Cell>
              <Cell $dark $right $bottom $size={13} $num $color="#9c2a1c">销售额</Cell>
              <Cell $dark $right $bottom $size={13} $num $pad={6} $color="#9c2a1c">营业税</Cell>
              <Cell $dark $right $bottom $size={13} $num $pad={6} $color="#9c2a1c">总计</Cell>
              <Cell />
            </tr>
            {items.map(([sku, name, link, date, sale, tax, total], i) => (
              <tr key={sku}>
                <RowHead scope="row" $h={22}>{7 + i}</RowHead>
                <Cell $right />
                <Cell $right $bottom>{sku}</Cell>
                <Cell $dark $right $bottom $size={13}>{link ? <Link href="#">{name}</Link> : name}</Cell>
                <Cell $right $bottom>{date}</Cell>
                <Cell $right $bottom $num $pad={6}>{sale}</Cell>
                <Cell $dark $right $bottom $num $pad={6} $color="#333">{tax}</Cell>
                <Cell $dark $right $bottom $num $pad={6} $color="#333">{total}</Cell>
                <Cell />
              </tr>
            ))}
            <tr>
              <RowHead scope="row" $h={22}>12</RowHead>
              <Cell $right />
              <Cell $dark $right $bottom $size={13} $bold>总计</Cell>
              <Cell $dark $noRight />
              <Cell $dark $right />
              <Cell $dark $right $bottom $num $pad={6}>¥1,838.20</Cell>
              <Cell $dark $right $bottom $num $pad={6}>¥91.91</Cell>
              <Cell $dark $right $bottom $num $pad={6}>¥1,930.11</Cell>
              <Cell />
            </tr>
            <EmptyRow n={13} />
            <EmptyRow n={14} />
          </tbody>
        </Grid>
        <Arrow width="150" height="36" viewBox="0 0 150 36"><path d="M6 27.500 120 11 119 5l27 2-26 11 .5-3.500L7 30.500z" fill="#f00" stroke="#f00" strokeLinejoin="round" /></Arrow>
        <Watermark>
          <svg width="42" height="40" viewBox="0 0 42 40">
            <defs>
              <linearGradient id="wa" x1="1" y1="0" x2="0" y2="1"><stop offset="0" stopColor="#35b4e8" /><stop offset="1" stopColor="#2a62b8" /></linearGradient>
              <linearGradient id="wb" x1="1" y1="0" x2="0" y2="1"><stop offset="0" stopColor="#35a853" /><stop offset="1" stopColor="#c5d63a" /></linearGradient>
            </defs>
            <path d="M41 1C22 0 2 11 1 23c0 6 5 8 10 8 8 0 14-4 14-9 0-4-5-5-9-3 3 0 5 1 3 4-3 4-9 4-10 0C8 14 24 4 41 1z" fill="url(#wa)" />
            <path d="M22 15c9-3 20-1 19 7-2 9-18 17-37 16 11-1 23-6 26-13 2-5-2-9-8-10z" fill="url(#wb)" />
          </svg>
          <div>
            <MarkName>极光下载站</MarkName>
            <MarkSite>www.xz7.com</MarkSite>
          </div>
        </Watermark>
      </Sheet>
    </Page>
  );
}
